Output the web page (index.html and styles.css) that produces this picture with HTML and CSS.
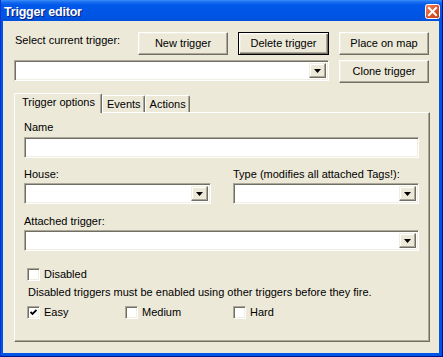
FILE: index.html
```html
<!DOCTYPE html>
<html>
<head>
<meta charset="utf-8">
<title>Trigger editor</title>
<link rel="stylesheet" href="styles.css">
</head>
<body>
<div class="window">
  <div class="titlebar">
    <span class="title">Trigger editor</span>
    <span class="close">
      <svg width="15" height="15" viewBox="0 0 15 15">
        <defs>
          <linearGradient id="cg" x1="0" y1="0" x2="1" y2="1">
            <stop offset="0" stop-color="#F08A66"/>
            <stop offset="0.5" stop-color="#E0562F"/>
            <stop offset="1" stop-color="#C13B14"/>
          </linearGradient>
        </defs>
        <rect x="0.5" y="0.5" width="14" height="14" rx="2" fill="url(#cg)" stroke="#FFFFFF"/>
        <path d="M4 4 L11 11 M11 4 L4 11" stroke="#FFFFFF" stroke-width="2" stroke-linecap="square"/>
      </svg>
    </span>
  </div>
  <div class="client">
    <div class="row-top">
      <span class="label sel-label">Select current trigger:</span>
      <div class="btn-group">
        <button class="btn w90">New trigger</button>
        <button class="btn w91 default">Delete trigger</button>
        <button class="btn w90">Place on map</button>
      </div>
    </div>
    <div class="row-second">
      <div class="field combo grow"><span class="drop"><svg width="7" height="4" viewBox="0 0 7 4"><polygon points="0,0 7,0 3.5,4" fill="#000"/></svg></span></div>
      <button class="btn w90 clone">Clone trigger</button>
    </div>
    <div class="tabs">
      <div class="tab active">Trigger options</div>
      <div class="tab">Events</div>
      <div class="tab">Actions</div>
    </div>
    <div class="panel">
      <div class="label">Name</div>
      <div class="field text"></div>
      <div class="pair">
        <div class="col">
          <div class="label">House:</div>
          <div class="field combo"><span class="drop"><svg width="7" height="4" viewBox="0 0 7 4"><polygon points="0,0 7,0 3.5,4" fill="#000"/></svg></span></div>
        </div>
        <div class="col">
          <div class="label">Type (modifies all attached Tags!):</div>
          <div class="field combo"><span class="drop"><svg width="7" height="4" viewBox="0 0 7 4"><polygon points="0,0 7,0 3.5,4" fill="#000"/></svg></span></div>
        </div>
      </div>
      <div class="label attached-label">Attached trigger:</div>
      <div class="field combo"><span class="drop"><svg width="7" height="4" viewBox="0 0 7 4"><polygon points="0,0 7,0 3.5,4" fill="#000"/></svg></span></div>
      <label class="check disabled-check"><span class="box"></span><span>Disabled</span></label>
      <div class="label info">Disabled triggers must be enabled using other triggers before they fire.</div>
      <div class="diffs">
        <label class="check c-easy"><span class="box"><svg width="7" height="7" viewBox="0 0 7 7"><polyline points="0.5,3 2.5,5 6.5,1" fill="none" stroke="#000" stroke-width="1.8"/></svg></span><span>Easy</span></label>
        <label class="check c-medium"><span class="box"></span><span>Medium</span></label>
        <label class="check"><span class="box"></span><span>Hard</span></label>
      </div>
    </div>
  </div>
</div>
</body>
</html>
```

FILE: styles.css
```css
html, body {
  margin: 0;
  padding: 0;
  background: #0054E3;
}

body {
  width: 443px;
  height: 357px;
  overflow: hidden;
  font-family: "Liberation Sans", Arial, sans-serif;
  font-size: 11px;
  color: #000;
}

.window {
  width: 443px;
  height: 357px;
  box-sizing: border-box;
  display: flex;
  flex-direction: column;
  background: #0055E5;
  border-left: 1px solid #0831D9;
  border-right: 1px solid #00138C;
  border-bottom: 1px solid #00138C;
}

.titlebar {
  height: 21px;
  flex: none;
  display: flex;
  align-items: center;
  justify-content: space-between;
  padding: 0 2px 0 3px;
  background: linear-gradient(to bottom, #3B8FF8 0px, #1A6EF0 2px, #0058EA 5px, #0055E5 12px, #0054E2 17px, #0050DA 21px);
}

.title {
  color: #FFFFFF;
  font-family: "Liberation Sans", Arial, sans-serif;
  font-weight: bold;
  font-size: 12.5px;
  letter-spacing: -0.2px;
  text-shadow: 1px 1px 0 #0A1E7A;
  margin-top: 2px;
}

.close {
  display: flex;
  width: 15px;
  height: 15px;
  margin-top: 1px;
}

.client {
  flex: 1;
  background: #ECE9D8;
  margin: 0 3px 3px 2px;
  padding: 11px 9px 0 11px;
  display: flex;
  flex-direction: column;
}

.label {
  line-height: 13px;
  white-space: nowrap;
}

.row-top {
  display: flex;
  align-items: flex-start;
  justify-content: space-between;
  margin-right: 1px;
}

.sel-label {
  margin-top: 2px;
  margin-left: 1px;
}

.btn-group {
  display: flex;
  gap: 10px;
}

.btn {
  height: 23px;
  box-sizing: border-box;
  padding: 0 0 1px 0;
  margin: 0;
  font-family: "Liberation Sans", Arial, sans-serif;
  font-size: 11px;
  color: #000;
  background: #ECE9D8;
  border: 1px solid;
  border-color: #FFFFFF #716F64 #716F64 #FFFFFF;
  box-shadow: inset -1px -1px 0 #ACA899, inset 1px 1px 0 #F1EFE2;
}

.btn.default {
  border: 1px solid #000000;
  box-shadow: inset 1px 1px 0 #FFFFFF, inset -1px -1px 0 #716F64, inset -2px -2px 0 #ACA899, inset 2px 2px 0 #F1EFE2;
}

.w90 { width: 90px; }
.w91 { width: 91px; }

.row-second {
  display: flex;
  align-items: flex-start;
  gap: 10px;
  margin-top: 5px;
  margin-right: 1px;
}

.grow {
  flex: 1;
}

.clone {
  margin-top: 0;
}

.field {
  box-sizing: border-box;
  height: 21px;
  background: #FFFFFF;
  border: 1px solid;
  border-color: #ACA899 #FFFFFF #FFFFFF #ACA899;
  box-shadow: inset 1px 1px 0 #716F64, inset -1px -1px 0 #F1EFE2;
  display: flex;
  justify-content: flex-end;
  padding: 2px;
}

.drop {
  width: 17px;
  height: 15px;
  box-sizing: border-box;
  background: #ECE9D8;
  border: 1px solid;
  border-color: #F1EFE2 #716F64 #716F64 #F1EFE2;
  box-shadow: inset -1px -1px 0 #ACA899, inset 1px 1px 0 #FFFFFF;
  display: flex;
  align-items: center;
  justify-content: center;
}

.drop svg {
  display: block;
  margin-top: 1px;
}

.tabs {
  display: flex;
  align-items: flex-end;
  margin-top: 10px;
  height: 19px;
  position: relative;
  z-index: 1;
}

.tab {
  box-sizing: border-box;
  height: 17px;
  padding: 1px 3px 0 4px;
  line-height: 14px;
  background: #ECE9D8;
  border-top: 1px solid #FFFFFF;
  border-left: 1px solid #FFFFFF;
  border-right: 1px solid #716F64;
  box-shadow: inset -1px 0 0 #ACA899;
  border-top-left-radius: 2px;
  border-top-right-radius: 2px;
}

.tab.active {
  height: 20px;
  margin-bottom: -1px;
  padding: 1px 6px 0 7px;
  line-height: 15px;
}

.panel {
  box-sizing: border-box;
  height: 230px;
  background: #ECE9D8;
  border: 1px solid;
  border-color: #FFFFFF #716F64 #716F64 #FFFFFF;
  box-shadow: inset -1px -1px 0 #ACA899;
  padding: 8px 10px 0 9px;
  display: flex;
  flex-direction: column;
}

.panel > .label:first-child {
  margin-bottom: 3px;
}

.pair {
  display: grid;
  grid-template-columns: 187px 1fr;
  column-gap: 22px;
  margin-top: 10px;
}

.col {
  display: flex;
  flex-direction: column;
  gap: 2px;
}

.attached-label {
  margin-top: 11px;
  margin-bottom: 2px;
}

.check {
  display: flex;
  align-items: center;
  gap: 4px;
  line-height: 13px;
}

.box {
  width: 13px;
  height: 13px;
  box-sizing: border-box;
  background: #FFFFFF;
  border: 1px solid;
  border-color: #ACA899 #FFFFFF #FFFFFF #ACA899;
  box-shadow: inset 1px 1px 0 #716F64, inset -1px -1px 0 #F1EFE2;
  display: flex;
  align-items: center;
  justify-content: center;
}

.box svg {
  display: block;
}

.disabled-check {
  margin-top: 17px;
  margin-left: 3px;
}

.info {
  margin-top: 5px;
  margin-left: 4px;
}

.diffs {
  display: flex;
  margin-top: 7px;
  margin-left: 3px;
}

.c-easy { width: 98px; }
.c-medium { width: 108px; }
```
